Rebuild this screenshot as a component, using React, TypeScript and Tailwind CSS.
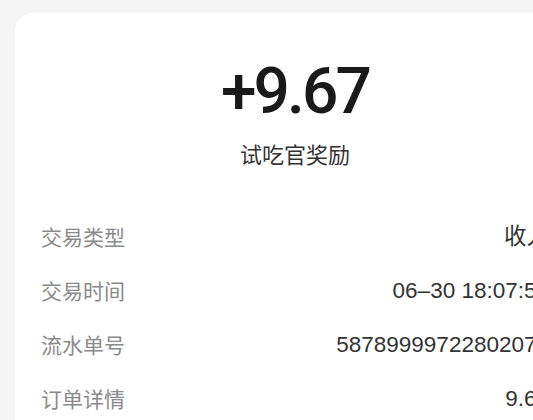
import React from "react";

const rows: { label: string; value: string }[] = [
  { label: "交易类型", value: "收入" },
  { label: "交易时间", value: "06–30 18:07:56" },
  { label: "流水单号", value: "58789999722802071" },
  { label: "订单详情", value: "9.67" },
];

export default function App() {
  return (
    <div className="w-[533px] h-[420px] overflow-hidden bg-[#f5f5f5]">
      <div className="pl-[15px] pt-[13px]">
        <div className="w-[560px] h-[460px] bg-white rounded-[18px] pt-[47px] px-[26px]">
          <div className="flex flex-col items-center">
            <div
              className="text-[64px] leading-none font-medium tracking-[-0.045em] text-[#1a1a1a]"
              style={{ fontFamily: "Roboto, 'Liberation Sans', sans-serif" }}
            >
              +9.67
            </div>
            <div
              className="mt-[13px] text-[22px] leading-[33px] text-[#333333]"
              style={{ fontFamily: "'Noto Sans CJK SC', sans-serif" }}
            >
              试吃官奖励
            </div>
          </div>
          <div className="mt-[40px] flex flex-col">
            {rows.map((r) => (
              <div key={r.label} className="h-[54px] flex items-center justify-between">
                <span
                  className="text-[21px] text-[#8a8a8a]"
                  style={{ fontFamily: "'Noto Sans CJK SC', sans-serif" }}
                >
                  {r.label}
                </span>
                <span
                  className="text-[22.5px] text-[#333333]"
                  style={{ fontFamily: "'Liberation Sans', 'Noto Sans CJK SC', sans-serif" }}
                >
                  {r.value}
                </span>
              </div>
            ))}
          </div>
        </div>
      </div>
    </div>
  );
}
